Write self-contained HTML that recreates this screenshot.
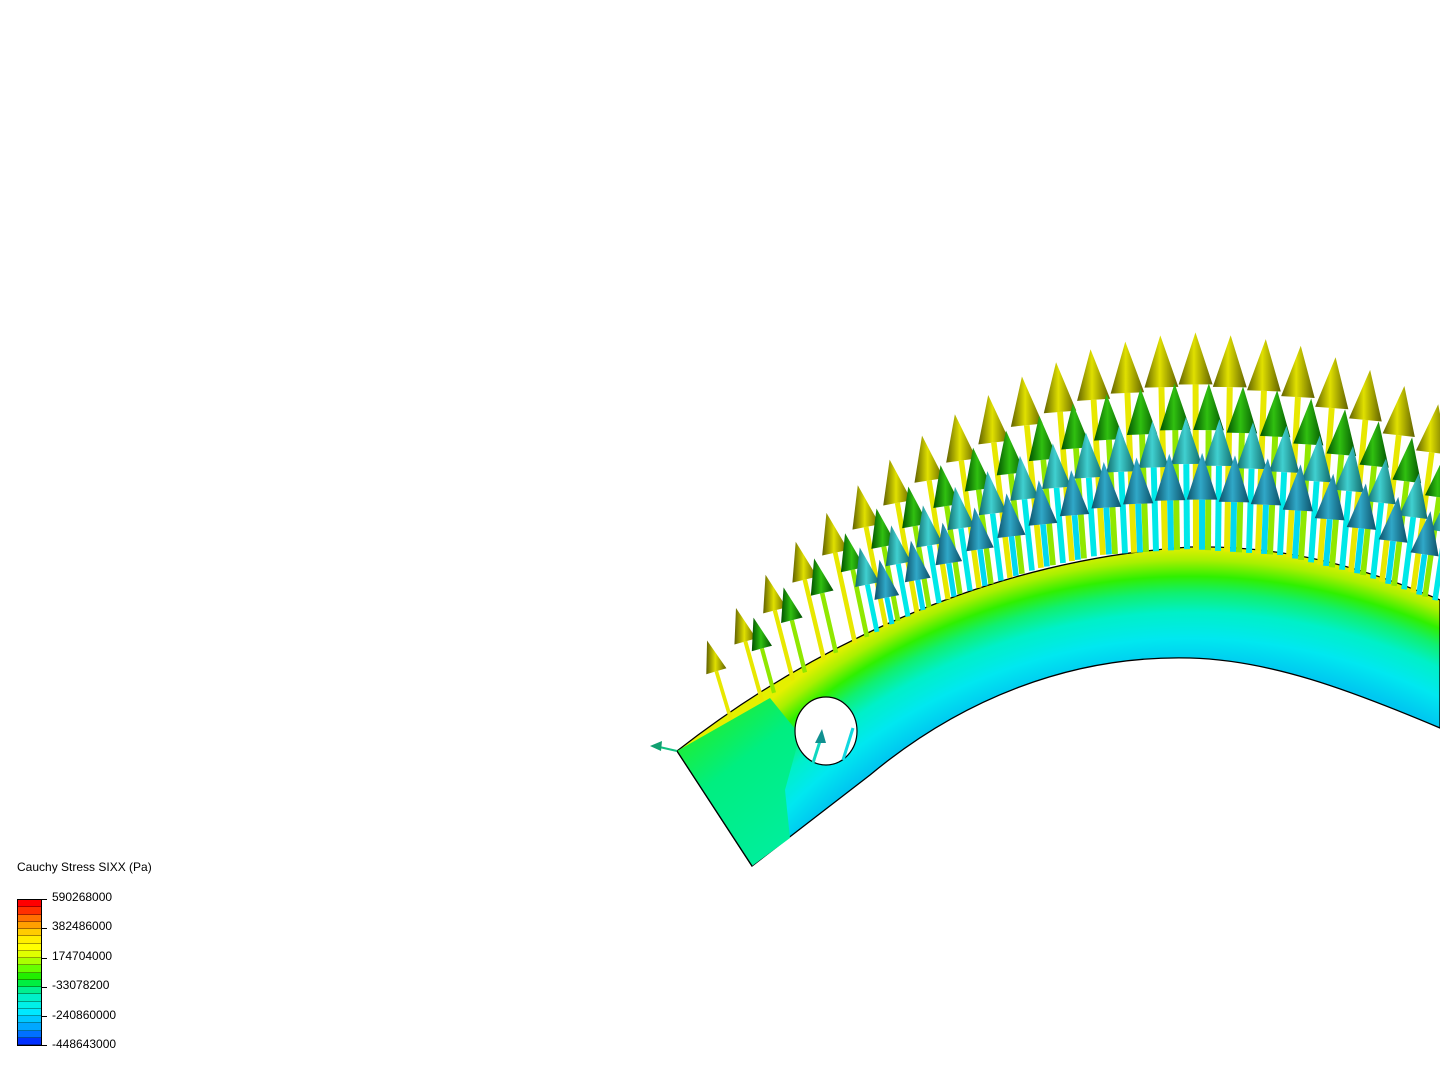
<!DOCTYPE html>
<html><head><meta charset="utf-8"><style>
html,body{margin:0;padding:0;background:#fff;width:1440px;height:1080px;overflow:hidden}
.t{position:absolute;font-family:"Liberation Sans",sans-serif;font-size:12px;color:#000}
</style></head><body>
<svg id="s" width="1440" height="1080" style="position:absolute;left:0;top:0">
<defs>
<radialGradient id="band" gradientUnits="userSpaceOnUse" cx="1190" cy="1200" r="653">
<stop offset="0.82" stop-color="#00c8f0"/>
<stop offset="0.86" stop-color="#00e8f0"/>
<stop offset="0.90" stop-color="#00f0c8"/>
<stop offset="0.93" stop-color="#10f070"/>
<stop offset="0.955" stop-color="#30f000"/>
<stop offset="0.98" stop-color="#a8f000"/>
<stop offset="1" stop-color="#e4f000"/>
</radialGradient>
<linearGradient id="endg" gradientUnits="userSpaceOnUse" x1="700" y1="720" x2="800" y2="850">
<stop offset="0" stop-color="#20ee30"/><stop offset="0.35" stop-color="#00ee80"/><stop offset="1" stop-color="#00eea0"/>
</linearGradient>
</defs>
<path d="M677,751 C800,655 980,560 1190,547 C1290,545 1370,570 1440,600 L1440,728 C1350,690 1270,660 1190,658 C1070,655 960,700 870,775 L752,866 Z" fill="url(#band)" stroke="#000" stroke-width="1.3"/>
<path d="M677,751 L752,866 L790,838 L785,790 L800,735 L770,698 Z" fill="url(#endg)"/>
<path d="M677,751 L752,866" stroke="#000" stroke-width="1.3"/>
<g id="arrows"></g>
<ellipse cx="826" cy="731" rx="31" ry="34" fill="#fff" stroke="#000" stroke-width="1.2"/>
<line x1="813" y1="763" x2="821" y2="738" stroke="#10d8c0" stroke-width="3"/>
<polygon points="822,729 815,743 826,743" fill="#109090"/>
<line x1="843" y1="760" x2="853" y2="728" stroke="#10d8e0" stroke-width="3"/>
<line x1="677" y1="751" x2="655" y2="746" stroke="#10c080" stroke-width="2"/>
<polygon points="650,746 662,741 661,751" fill="#10a070"/>
</svg>
<div class="t" style="left:17px;top:860px">Cauchy Stress SIXX (Pa)</div>
<div id="bar" style="position:absolute;left:17px;top:899px;width:25px;height:147px;border:1px solid #000;box-sizing:border-box"></div>
<div class="t" style="left:52px;top:890px">590268000</div>
<div class="t" style="left:52px;top:919px">382486000</div>
<div class="t" style="left:52px;top:949px">174704000</div>
<div class="t" style="left:52px;top:978px">-33078200</div>
<div class="t" style="left:52px;top:1008px">-240860000</div>
<div class="t" style="left:52px;top:1037px">-448643000</div>
<div style="position:absolute;left:42px;top:899px;width:5px;height:1px;background:#000"></div>
<div style="position:absolute;left:42px;top:928px;width:5px;height:1px;background:#000"></div>
<div style="position:absolute;left:42px;top:958px;width:5px;height:1px;background:#000"></div>
<div style="position:absolute;left:42px;top:987px;width:5px;height:1px;background:#000"></div>
<div style="position:absolute;left:42px;top:1016px;width:5px;height:1px;background:#000"></div>
<div style="position:absolute;left:42px;top:1045px;width:5px;height:1px;background:#000"></div>
<script>
var cols=["#ff0000","#ff3000","#ff7000","#ffa000","#ffcc00","#ffee00","#ffff00","#e0ff00","#aaff00","#66ff00","#22ee00","#00ee40","#00f090","#00f0c8","#00f0e8","#00e8ff","#00c8ff","#00a8ff","#0070ff","#0030ff"];
var bar=document.getElementById('bar');
cols.forEach(function(c){var d=document.createElement('div');d.style.cssText='height:7.25px;background:'+c+';border-bottom:1px solid rgba(0,0,0,.35);box-sizing:border-box';bar.appendChild(d);});
var pts=[[660,762],[677,751],[760,700],[830,654],[900,618],[960,592],[1040,566],[1100,553],[1190,547],[1280,553],[1360,572],[1440,600],[1500,628]];
function oy(x){for(var i=0;i<pts.length-1;i++){if(x>=pts[i][0]&&x<=pts[i+1][0]){var t=(x-pts[i][0])/(pts[i+1][0]-pts[i][0]);return pts[i][1]+t*(pts[i+1][1]-pts[i][1]);}}return 600;}
var NS='http://www.w3.org/2000/svg',g=document.getElementById('arrows'),defs=document.querySelector('defs');
var layers=[
 {L:217,off:0,min:720,h1:'#e0e000',h2:'#606000',sh:'#e8e800'},
 {L:167,off:12,min:760,h1:'#30c010',h2:'#005000',sh:'#90e800'},
 {L:132,off:22,min:860,h1:'#40d0d0',h2:'#106868',sh:'#00e8e8'},
 {L:97,off:6,min:880,h1:'#30a8c8',h2:'#0c5068',sh:'#00d8f0'}];
layers.forEach(function(ly,i){
 var lg=document.createElementNS(NS,'linearGradient');lg.id='h'+i;lg.setAttribute('x1','0');lg.setAttribute('x2','1');lg.setAttribute('y1','0');lg.setAttribute('y2','0');
 lg.innerHTML='<stop offset="0" stop-color="'+ly.h2+'"/><stop offset="0.45" stop-color="'+ly.h1+'"/><stop offset="1" stop-color="'+ly.h2+'"/>';defs.appendChild(lg);
});
function el(n,a){var e=document.createElementNS(NS,n);for(var k in a)e.setAttribute(k,a[k]);g.appendChild(e);return e;}
layers.forEach(function(ly,i){
 for(var x=700+ly.off;x<1480;x+=31){
  if(x<ly.min)continue;
  var gx;
  if(x>=1190) gx=Math.max(0.15,1-0.9*Math.pow((x-1190)/600,2));
  else gx=Math.max(0.2,1-0.6*Math.pow((1190-x)/450,1.5));
  var a=(x-1200)/480*0.3;
  var L=ly.L*gx, s=Math.sqrt(gx);
  var by=oy(x)+2, sx=Math.sin(a), cy=Math.cos(a);
  var tx=x+sx*L, ty=by-cy*L;
  var h=52*s*(i==0?1:0.9), w=34*s*(i==0?1:0.9);
  var hx=tx-sx*h, hy=ty+cy*h;
  el('line',{x1:x,y1:by,x2:hx,y2:hy,stroke:ly.sh,'stroke-width':6*s});
  var px=cy*w/2, py=sx*w/2;
  el('polygon',{points:tx+','+ty+' '+(hx-px)+','+(hy-py)+' '+(hx+px)+','+(hy+py),fill:'url(#h'+i+')'});
 }
});
</script>
</body></html>
